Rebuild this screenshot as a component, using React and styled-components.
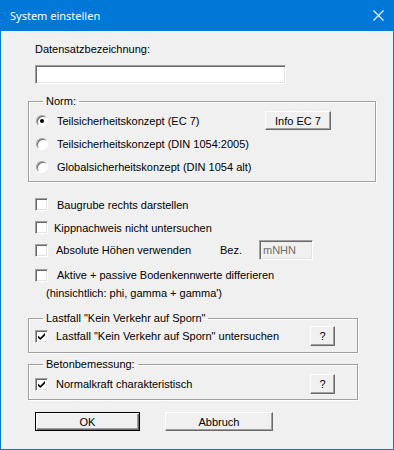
import React from 'react';
import styled, { createGlobalStyle } from 'styled-components';

const GlobalStyle = createGlobalStyle`
  html, body {
    margin: 0;
    padding: 0;
    background: #f0f0f0;
  }
  body {
    font-family: "Liberation Sans", Arial, sans-serif;
    font-size: 11px;
    color: #000;
  }
`;

const Window = styled.div`
  width: 394px;
  height: 450px;
  box-sizing: border-box;
  border: 1px solid #0078d7;
  border-top: none;
  background: #f0f0f0;
  display: flex;
  flex-direction: column;
`;

const TitleBar = styled.div`
  height: 31px;
  margin: 0 -1px;
  background: #0078d7;
  color: #fff;
  display: flex;
  align-items: center;
  justify-content: space-between;
  padding: 0 9px 0 10px;
  font-family: "Noto Sans", "Open Sans", sans-serif;
  font-size: 11px;
`;

const CloseIcon = styled.svg`
  width: 11px;
  height: 11px;
  margin-right: 1px;
`;

const Body = styled.div`
  padding: 12px 0 0 27px;
  display: flex;
  flex-direction: column;
`;

const Label = styled.div`
  height: 13px;
  line-height: 13px;
  padding-left: ${(p) => p.indent || 7}px;
  white-space: nowrap;
`;

const FieldWrap = styled.div`
  padding-left: 7px;
  margin-top: 9px;
  margin-bottom: 11px;
`;

const TextField = styled.div`
  box-sizing: border-box;
  width: ${(p) => p.width}px;
  height: ${(p) => p.height || 19}px;
  background: ${(p) => (p.disabled ? '#f0f0f0' : '#fff')};
  border: 1px solid;
  border-color: #a0a0a0 #fff #fff #a0a0a0;
  box-shadow: inset 1px 1px 0 #696969, inset -1px -1px 0 #e3e3e3;
  color: #6d6d6d;
  padding: 3px 0 0 3px;
  line-height: 13px;
  font-size: 11px;
`;

const Group = styled.fieldset`
  margin: ${(p) => p.top || 0}px 0 0 0;
  padding: 0 5px ${(p) => p.bottom || 0}px 6px;
  border: 1px solid #a0a0a0;
  box-shadow: 1px 1px 0 #fff, inset 1px 1px 0 #fff;
  width: ${(p) => p.width || 330}px;
  box-sizing: border-box;
  min-width: 0;
`;

const Legend = styled.legend`
  padding: 0 3px;
  margin-left: 8px;
  height: 13px;
  line-height: 13px;
  font-size: 11px;
  white-space: nowrap;
`;

const Row = styled.div`
  display: flex;
  align-items: center;
  height: ${(p) => p.h || 23}px;
  margin-top: ${(p) => p.top || 0}px;
  white-space: nowrap;
`;

const Radio = styled.span`
  box-sizing: border-box;
  width: 12px;
  height: 12px;
  margin-left: 1px;
  border-radius: 50%;
  border: 1px solid;
  border-color: #a0a0a0 #fff #fff #a0a0a0;
  background: #fff;
  box-shadow: inset 1px 1px 0 #696969;
  display: flex;
  align-items: center;
  justify-content: center;
  flex: none;

  &::after {
    content: '';
    width: 4px;
    height: 4px;
    border-radius: 50%;
    background: ${(p) => (p.checked ? '#000' : 'transparent')};
  }
`;

const Check = styled.span`
  box-sizing: border-box;
  width: 13px;
  height: 13px;
  border: 1px solid;
  border-color: #a0a0a0 #fff #fff #a0a0a0;
  box-shadow: inset 1px 1px 0 #696969, inset -1px -1px 0 #e3e3e3;
  background: #fff;
  display: flex;
  align-items: center;
  justify-content: center;
  flex: none;
`;

const RowText = styled.span`
  margin-left: ${(p) => p.gap || 9}px;
`;

const Button = styled.div`
  box-sizing: border-box;
  width: ${(p) => p.width}px;
  height: ${(p) => p.height || 20}px;
  background: #f0f0f0;
  border: 1px solid;
  border-color: ${(p) => (p.primary ? '#000' : '#fff #696969 #696969 #fff')};
  box-shadow: ${(p) =>
    p.primary
      ? 'inset 1px 1px 0 #fff, inset -1px -1px 0 #696969, inset -2px -2px 0 #a0a0a0'
      : 'inset -1px -1px 0 #a0a0a0'};
  display: flex;
  align-items: center;
  justify-content: center;
  font-size: 11px;
  flex: none;
`;

const RightButton = styled(Button)`
  margin-left: auto;
  margin-right: ${(p) => p.right}px;
`;

const Footer = styled.div`
  display: flex;
  gap: 25px;
  padding-left: 7px;
  margin-top: 12px;
`;

const Options = styled.div`
  width: 330px;
  box-sizing: border-box;
  padding-left: 7px;
  margin-top: 11px;
`;

const Note = styled.div`
  height: 13px;
  line-height: 13px;
  padding-left: 11px;
  margin-top: 1px;
  margin-bottom: 12px;
`;

const Bez = styled.span`
  margin-left: auto;
  margin-right: 17px;
`;

const Filler = styled.span`
  width: ${(p) => p.w}px;
  flex: none;
`;

const Tick = () => (
  <svg width="9" height="9" viewBox="0 0 9 9">
    <path d="M1 3.5 L3.3 5.8 L8 1 L8 3.4 L3.3 8 L1 5.8 Z" fill="#000" />
  </svg>
);

export default function App() {
  return (
    <>
      <GlobalStyle />
      <Window>
        <TitleBar>
          <span>System einstellen</span>
          <CloseIcon viewBox="0 0 11 11">
            <path d="M0.5 0.5 L10.5 10.5 M10.5 0.5 L0.5 10.5" stroke="#fff" strokeWidth="1.1" />
          </CloseIcon>
        </TitleBar>
        <Body>
          <Label>Datensatzbezeichnung:</Label>
          <FieldWrap>
            <TextField width={251} />
          </FieldWrap>

          <Group width={348} bottom={3}>
            <Legend>Norm:</Legend>
            <Row top={1}>
              <Radio checked />
              <RowText gap={9}>Teilsicherheitskonzept (EC 7)</RowText>
              <RightButton width={66} height={19} right={39}>Info EC 7</RightButton>
            </Row>
            <Row>
              <Radio />
              <RowText gap={9}>Teilsicherheitskonzept (DIN 1054:2005)</RowText>
            </Row>
            <Row>
              <Radio />
              <RowText gap={9}>Globalsicherheitskonzept (DIN 1054 alt)</RowText>
            </Row>
          </Group>

          <Options>
            <Row>
              <Check />
              <RowText gap={9}>Baugrube rechts darstellen</RowText>
            </Row>
            <Row>
              <Check />
              <RowText gap={6}>Kippnachweis nicht untersuchen</RowText>
            </Row>
            <Row h={22}>
              <Check />
              <RowText gap={8}>Absolute Höhen verwenden</RowText>
              <Bez>Bez.</Bez>
              <TextField width={54} height={20} disabled>mNHN</TextField>
              <Filler w={45} />
            </Row>
            <Row h={22} top={3}>
              <Check />
              <RowText gap={9}>Aktive + passive Bodenkennwerte differieren</RowText>
            </Row>
            <Note>(hinsichtlich: phi, gamma + gamma')</Note>
          </Options>

          <Group bottom={5}>
            <Legend>Lastfall "Kein Verkehr auf Sporn"</Legend>
            <Row h={22}>
              <Check><Tick /></Check>
              <RowText gap={8}>Lastfall "Kein Verkehr auf Sporn" untersuchen</RowText>
              <RightButton width={25} height={20} right={17}>?</RightButton>
            </Row>
          </Group>

          <Group top={5} bottom={4}>
            <Legend>Betonbemessung:</Legend>
            <Row h={22} top={2}>
              <Check><Tick /></Check>
              <RowText gap={8}>Normalkraft charakteristisch</RowText>
              <RightButton width={25} height={20} right={17}>?</RightButton>
            </Row>
          </Group>

          <Footer>
            <Button primary width={105} height={19}>OK</Button>
            <Button width={108} height={19}>Abbruch</Button>
          </Footer>
        </Body>
      </Window>
    </>
  );
}
